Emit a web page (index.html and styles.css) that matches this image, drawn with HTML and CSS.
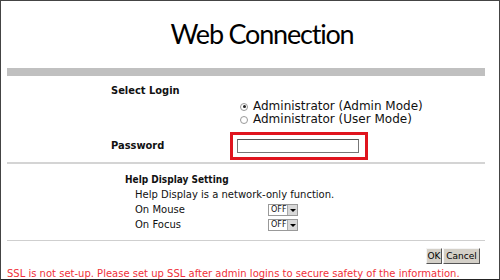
FILE: index.html
```html
<!DOCTYPE html>
<html lang="en">
<head>
    <meta charset="UTF-8">
    <title>Web Connection</title>
    <link rel="stylesheet" href="styles.css">
</head>
<body>
    <div class="frame">
        <h1 class="title">Web Connection</h1>
        <div class="bar"></div>

        <div class="login">
            <div class="row-label">Select Login</div>
            <div class="modes">
                <label class="mode"><span class="radio checked"></span>Administrator (Admin Mode)</label>
                <label class="mode"><span class="radio"></span>Administrator (User Mode)</label>
            </div>
            <div class="pass-row">
                <span class="row-label">Password</span>
                <div class="highlight"><span class="pass-input"></span></div>
            </div>
        </div>

        <div class="rule"></div>

        <div class="help">
            <div class="help-title">Help Display Setting</div>
            <div class="help-body">
                <p>Help Display is a network-only function.</p>
                <div class="help-opt">
                    <span class="opt-name">On Mouse</span>
                    <span class="select">OFF<span class="arrow"></span></span>
                </div>
                <div class="help-opt">
                    <span class="opt-name">On Focus</span>
                    <span class="select">OFF<span class="arrow"></span></span>
                </div>
            </div>
        </div>

        <div class="rule light"></div>

        <div class="actions">
            <button class="btn ok">OK</button>
            <button class="btn cancel">Cancel</button>
        </div>

        <p class="warning">SSL is not set-up. Please set up SSL after admin logins to secure safety of the information.</p>
    </div>
</body>
</html>
```

FILE: styles.css
```css
body {
    margin: 0;
    font-family: "DejaVu Sans", Verdana, sans-serif;
    font-size: 12px;
    color: #111;
    background: #fff;
}
.frame {
    width: 500px;
    height: 280px;
    box-sizing: border-box;
    border: 1px solid #444;
    border-bottom-color: #222;
    padding: 0 14px 0 6px;
    overflow: hidden;
}
.title {
    margin: 0;
    padding: 16px 0 0 32px;
    height: 49px;
    box-sizing: border-box;
    text-align: center;
    font-family: Lato, "Open Sans", sans-serif;
    font-weight: 400;
    font-size: 27px;
    letter-spacing: -1.2px;
    line-height: 34px;
    color: #000;
}
.bar {
    height: 8px;
    background: #c0c0c0;
    margin-top: 18px;
}
.login {
    padding: 8px 0 0 104px;
}
.row-label {
    font-family: "DejaVu Sans Condensed", "DejaVu Sans", sans-serif;
    font-stretch: condensed;
    font-size: 11px;
    font-weight: bold;
    line-height: 14px;
}
.modes {
    display: flex;
    flex-direction: column;
    padding-left: 129px;
    margin-top: 2px;
}
.mode {
    display: flex;
    align-items: center;
    gap: 5px;
    line-height: 13px;
}
.radio {
    width: 6px;
    height: 6px;
    border: 1px solid #999;
    border-radius: 50%;
    display: inline-flex;
    align-items: center;
    justify-content: center;
}
.radio.checked::after {
    content: "";
    width: 3px;
    height: 3px;
    border-radius: 50%;
    background: #222;
}
.pass-row {
    display: flex;
    align-items: center;
    margin-top: 6px;
}
.pass-row .row-label {
    width: 119px;
}
.highlight {
    border: 3px solid #e0141e;
    padding: 4px 6px 4px 4px;
    width: 122px;
    height: 14px;
}
.pass-input {
    display: block;
    height: 12px;
    border: 1px solid #777;
    border-top-color: #555;
    background: #fff;
}
.rule {
    height: 2px;
    background: #d4d4d4;
    margin: 2px 0 0 0;
}
.rule.light {
    height: 1px;
    background: #cfcfcf;
    margin-top: 8px;
}
.help {
    padding: 9px 0 0 118px;
    font-size: 10px;
}
.help-title {
    font-family: "DejaVu Sans Condensed", "DejaVu Sans", sans-serif;
    font-stretch: condensed;
    font-size: 10px;
    font-weight: bold;
    line-height: 14px;
}
.help-body {
    padding-left: 10px;
}
.help-body p {
    margin: 0;
    line-height: 15px;
}
.help-opt {
    display: flex;
    align-items: center;
    height: 15px;
}
.opt-name {
    width: 133px;
}
.select {
    display: inline-flex;
    align-items: center;
    justify-content: space-between;
    width: 30px;
    height: 12px;
    box-sizing: border-box;
    border: 1px solid #999;
    padding-left: 2px;
    font-size: 8px;
    background: #fff;
}
.arrow {
    width: 9px;
    height: 10px;
    background: #d8d8d8;
    border-left: 1px solid #aaa;
    position: relative;
}
.arrow::after {
    content: "";
    position: absolute;
    left: 2px;
    top: 4px;
    border-left: 3px solid transparent;
    border-right: 3px solid transparent;
    border-top: 3px solid #000;
}
.actions {
    display: flex;
    justify-content: flex-end;
    gap: 1px;
    margin: 7px 5px 0 0;
}
.btn {
    font-family: "DejaVu Sans", Verdana, sans-serif;
    font-size: 9px;
    height: 16px;
    padding: 0;
    background: #d4d0c8;
    border: 1px solid;
    border-color: #f4f4f4 #555 #555 #f4f4f4;
    color: #000;
}
.ok {
    width: 16px;
}
.cancel {
    width: 37px;
}
.warning {
    margin: 3px 0 0 0;
    font-size: 10px;
    color: #f0313a;
    line-height: 13px;
    white-space: nowrap;
}
```
